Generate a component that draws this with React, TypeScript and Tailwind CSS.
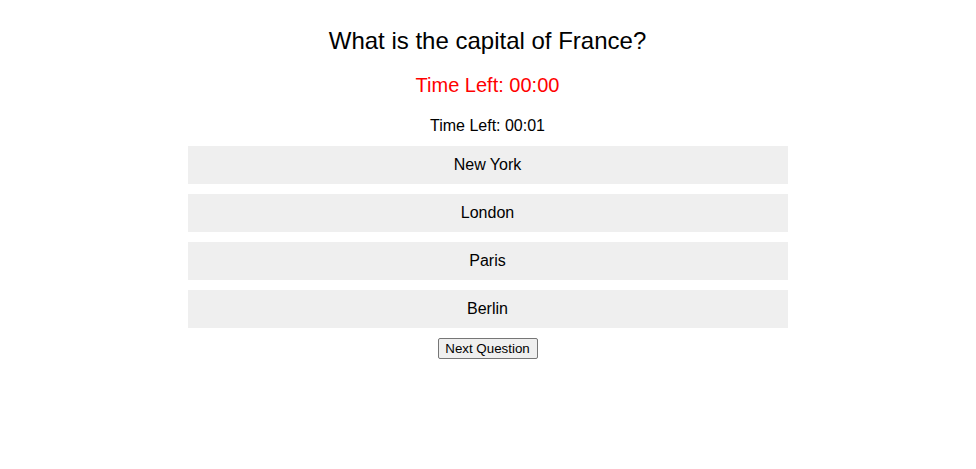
import React from 'react';

const options = ['New York', 'London', 'Paris', 'Berlin'];

export default function App() {
  return (
    <div className="min-h-[469px] w-[975px] bg-white font-['Liberation_Sans',Arial,sans-serif] text-black">
      <div className="flex flex-col items-center pt-[27px]">
        <h2 className="text-[24px] leading-[28px]">What is the capital of France?</h2>
        <p className="mt-[19px] text-[20px] leading-[23px] text-[#ff0000]">Time Left: 00:00</p>
        <p className="mt-[20px] text-[16px] leading-[18px]">Time Left: 00:01</p>
        <div className="mt-[11px] flex w-[600px] flex-col gap-[10px]">
          {options.map((opt) => (
            <div
              key={opt}
              className="flex h-[38px] items-center justify-center bg-[#efefef] text-[16px]"
            >
              {opt}
            </div>
          ))}
        </div>
        <button className="mt-[10px] h-[21px] w-[100px] rounded-[2px] border border-[#767676] bg-[#efefef] text-[13.33px] leading-[16px]">
          Next Question
        </button>
      </div>
    </div>
  );
}
